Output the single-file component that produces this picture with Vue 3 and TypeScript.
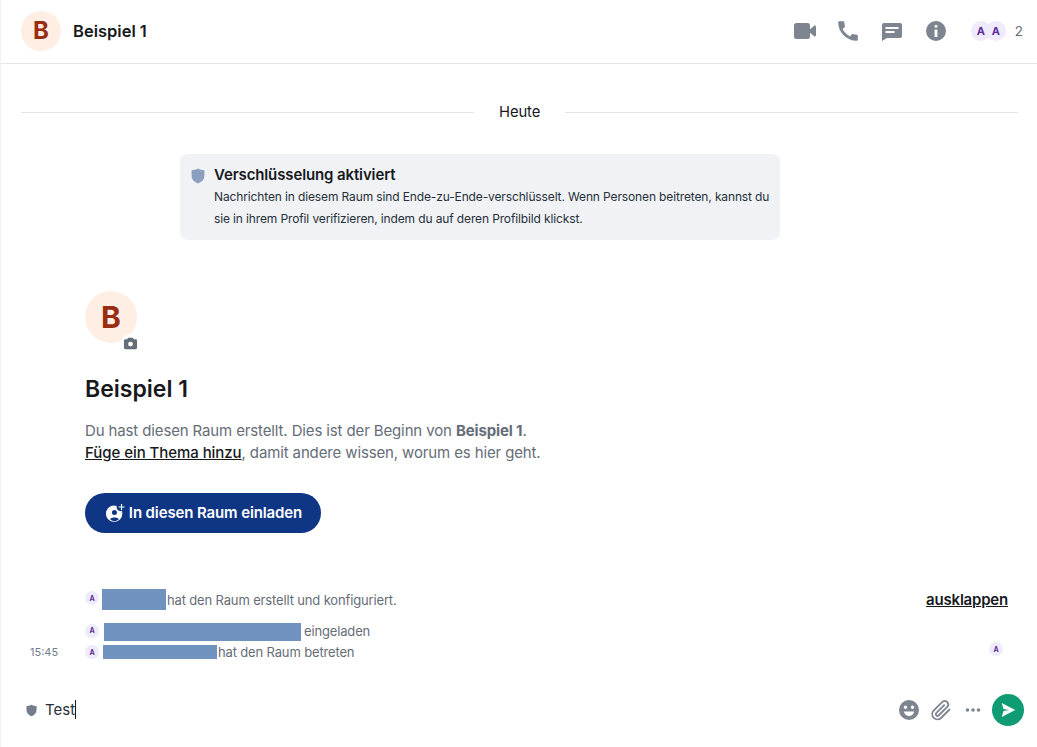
<template>
  <div class="room">
    <header class="room-header">
      <div class="avatar avatar-small">B</div>
      <h1 class="room-name">Beispiel 1</h1>
      <div class="header-actions">
        <svg class="icon video" viewBox="0 0 24 24"><path d="M3.500 4h11A2.500 2.500 0 0 1 17 6.500v3.700l4.200-3.400c.7-.5 1.800 0 1.800.9v8.600c0 .9-1.100 1.400-1.800.9L17 13.800v3.700a2.500 2.500 0 0 1-2.500 2.500h-11A2.500 2.500 0 0 1 1 17.500v-11A2.500 2.500 0 0 1 3.500 4z" /></svg>
        <svg class="icon phone" viewBox="1 1 22 22"><path d="M20.010 15.380c-1.230 0-2.420-.2-3.530-.56-.35-.12-.74-.03-1.010.24l-1.570 1.970c-2.830-1.350-5.480-3.900-6.890-6.830l1.950-1.660c.27-.28.35-.67.24-1.020-.37-1.110-.56-2.300-.56-3.530 0-.54-.45-.99-.99-.99H4.190C3.650 3 3 3.240 3 3.990 3 13.280 10.730 21 20.010 21c.71 0 .99-.63.99-1.180v-3.450c0-.54-.45-.99-.99-.99z" /></svg>
        <svg class="icon chat" viewBox="0 0 24 24"><path fill-rule="evenodd" d="M4 4h16a2 2 0 0 1 2 2v11a2 2 0 0 1-2 2H7l-5 3V6a2 2 0 0 1 2-2zM5.500 8v2h13V8zm0 4v2h9v-2z" /></svg>
        <svg class="icon info" viewBox="0 0 24 24"><path fill-rule="evenodd" d="M12 2a10 10 0 1 1 0 20 10 10 0 0 1 0-20zM12 5.800a1.500 1.500 0 1 0 0 3 1.500 1.500 0 0 0 0-3zM10.600 10.500v7.500h2.800v-7.500z" /></svg>
        <div class="members">
          <span class="face">A</span>
          <span class="face second">A</span>
          <span class="member-count">2</span>
        </div>
      </div>
    </header>

    <main class="timeline">
      <div class="date-separator">
        <span class="line"></span>
        <span class="date-label">Heute</span>
        <span class="line"></span>
      </div>

      <div class="encryption-notice">
        <svg class="shield" viewBox="0 0 14 16"><path d="M7 .6c1.800 1 3.900 1.500 6.400 1.700v5.200c0 3.900-2.400 6.500-6.400 7.900C3 14 .6 11.400.6 7.500V2.300C3.100 2.100 5.200 1.600 7 .6z" /></svg>
        <div>
          <div class="notice-title">Verschlüsselung aktiviert</div>
          <div class="notice-text">Nachrichten in diesem Raum sind Ende-zu-Ende-verschlüsselt. Wenn Personen beitreten, kannst du sie in ihrem Profil verifizieren, indem du auf deren Profilbild klickst.</div>
        </div>
      </div>

      <section class="room-intro">
        <div class="avatar-wrap">
          <div class="avatar avatar-large">B</div>
          <span class="camera">
            <svg viewBox="0 0 16 16"><path fill-rule="evenodd" d="M5.500 1.800h5l1 1.700h2A1.500 1.500 0 0 1 15 5v7.500a1.500 1.500 0 0 1-1.500 1.500h-11A1.500 1.500 0 0 1 1 12.500V5a1.500 1.500 0 0 1 1.500-1.500h2zM8 6a2.600 2.600 0 1 0 0 5.200A2.600 2.600 0 0 0 8 6z" /></svg>
          </span>
        </div>
        <h2 class="intro-name">Beispiel 1</h2>
        <p class="intro-text">
          Du hast diesen Raum erstellt. Dies ist der Beginn von <b>Beispiel 1</b>.<br />
          <a class="topic-link">Füge ein Thema hinzu</a>, damit andere wissen, worum es hier geht.
        </p>
        <button class="invite-button">
          <svg viewBox="0 0 20 20"><path fill-rule="evenodd" d="M9 2.500c.8 0 1.600.1 2.300.4a3.600 3.600 0 0 0 4.700 4.600c.4.9.5 1.800.5 2.700A7.800 7.800 0 1 1 9 2.500zM9 6.600a2.400 2.400 0 1 0 0 4.800 2.400 2.400 0 0 0 0-4.800zM4.600 15.300c1.100 1.200 2.700 2 4.400 2s3.300-.8 4.400-2c-1.100-1-2.700-1.600-4.400-1.600s-3.300.6-4.400 1.600z" /><path d="M15.200 1h1.100v2.300h2.300v1.100h-2.300v2.300h-1.100V4.400h-2.300V3.300h2.300z" /></svg>
          <span class="invite-label">In diesen Raum einladen</span>
        </button>
      </section>

      <section class="events">
        <div class="event event-summary">
          <span class="mini-face">A</span>
          <span class="redacted redacted-a"></span>
          <span class="event-text">hat den Raum erstellt und konfiguriert.</span>
          <a class="expand-link">ausklappen</a>
        </div>
        <div class="event event-invite">
          <span class="mini-face">A</span>
          <span class="redacted redacted-b"></span>
          <span class="event-text">eingeladen</span>
        </div>
        <div class="event event-join">
          <span class="timestamp">15:45</span>
          <span class="mini-face">A</span>
          <span class="redacted redacted-c"></span>
          <span class="event-text">hat den Raum betreten</span>
          <span class="mini-face receipt">A</span>
        </div>
      </section>
    </main>

    <footer class="composer">
      <svg class="composer-shield" viewBox="0 0 14 16"><path d="M7 .6c1.800 1 3.900 1.500 6.400 1.700v5.200c0 3.900-2.400 6.500-6.400 7.900C3 14 .6 11.400.6 7.500V2.300C3.100 2.100 5.200 1.600 7 .6z" /></svg>
      <div class="composer-input"><span>Test</span><i class="caret"></i></div>
      <svg class="tool smile" viewBox="0 0 24 24"><path fill-rule="evenodd" d="M12 2a10 10 0 1 1 0 20 10 10 0 0 1 0-20zM8.500 7.500a1.700 1.700 0 1 0 0 3.400 1.700 1.700 0 0 0 0-3.400zm7 0a1.700 1.700 0 1 0 0 3.400 1.700 1.700 0 0 0 0-3.400zM6.800 13.500c.5 2.700 2.600 4.500 5.200 4.500s4.700-1.800 5.200-4.500z" /></svg>
      <svg class="tool clip" viewBox="0 0 24 24"><path d="M20.500 11.500 12 20a5.200 5.200 0 0 1-7.400-7.300l9-9a3.500 3.500 0 0 1 4.900 4.900l-8.900 8.900a1.700 1.700 0 0 1-2.400-2.400l8-8" /></svg>
      <svg class="tool dots" viewBox="0 0 16 6"><circle cx="2.500" cy="3" r="1.800" /><circle cx="8" cy="3" r="1.800" /><circle cx="13.500" cy="3" r="1.800" /></svg>
      <button class="send-button">
        <svg viewBox="0 0 20 20"><path d="M3 2.200 18 10 3 17.800l2-6.600 6-1.200-6-1.200z" /></svg>
      </button>
    </footer>
  </div>
</template>

<script setup lang="ts">
</script>

<style>
html,
body {
  margin: 0;
  background: #fff;
}
</style>

<style scoped>
.room {
  width: 1037px;
  height: 747px;
  display: flex;
  flex-direction: column;
  overflow: hidden;
  font-family: Inter, "Liberation Sans", sans-serif;
  color: #17191c;
  box-sizing: border-box;
  border-left: 1px solid #f0f2f5;
}

.room-header {
  height: 64px;
  flex: none;
  box-sizing: border-box;
  display: flex;
  align-items: center;
  padding: 0 14px 2px 20px;
  border-bottom: 1px solid #e3e5e8;
}

.avatar {
  border-radius: 50%;
  background: #ffeee4;
  color: #982d12;
  font-weight: 700;
  display: flex;
  align-items: center;
  justify-content: center;
}

.avatar-small {
  width: 40px;
  height: 40px;
  font-size: 24px;
}

.room-name {
  margin: 0 0 0 12px;
  font-size: 16.500px;
  font-weight: 600;
}

.header-actions {
  margin-left: auto;
  display: flex;
  align-items: center;
}

.icon {
  width: 24px;
  height: 24px;
  fill: #7d8590;
  margin-right: 20px;
}

.video {
  margin-right: 19px;
}

.members {
  display: flex;
  align-items: center;
  margin-left: 3px;
}

.face {
  width: 20px;
  height: 20px;
  border-radius: 50%;
  background: #f0ebfa;
  color: #5c2d9e;
  font-size: 11px;
  font-weight: 700;
  display: flex;
  align-items: center;
  justify-content: center;
}

.second {
  margin-left: -5px;
}

.member-count {
  margin-left: 9px;
  font-size: 13.500px;
  color: #656d77;
}

.timeline {
  flex: 1;
  min-height: 0;
}

.date-separator {
  margin: 39px 19px 0 20px;
  height: 18px;
  display: flex;
  align-items: center;
  gap: 25px;
}

.line {
  flex: 1;
  height: 1px;
  background: #e3e5e8;
}

.date-label {
  width: 41px;
  font-size: 14.800px;
  letter-spacing: -0.1px;
  line-height: 16px;
  text-align: center;
}

.encryption-notice {
  width: 600px;
  height: 86px;
  box-sizing: border-box;
  margin: 33px 0 0 179px;
  padding: 10px 8px 0 11px;
  display: flex;
  gap: 9px;
  background: #f0f2f5;
  border-radius: 8px;
}

.shield {
  width: 14px;
  height: 16px;
  flex: none;
  margin-top: 4px;
  fill: #8c9fbf;
}

.notice-title {
  font-size: 15px;
  letter-spacing: -0.12px;
  font-weight: 600;
  line-height: 21px;
}

.notice-text {
  margin-top: 1px;
  font-size: 12px;
  letter-spacing: -0.13px;
  line-height: 21.500px;
  color: #27303a;
}

.room-intro {
  margin: 51px 0 0 84px;
}

.avatar-wrap {
  position: relative;
  width: 52px;
  height: 52px;
}

.avatar-large {
  width: 52px;
  height: 52px;
  font-size: 30px;
}

.camera {
  position: absolute;
  right: -2px;
  bottom: -9px;
  width: 18px;
  height: 18px;
  border-radius: 50%;
  background: #fff;
  display: flex;
  align-items: center;
  justify-content: center;
}

.camera svg {
  width: 15px;
  height: 15px;
  fill: #656d77;
}

.intro-name {
  margin: 32px 0 0;
  font-size: 23px;
  line-height: 28px;
  font-weight: 600;
}

.intro-text {
  margin: 17px 0 0;
  font-size: 15px;
  letter-spacing: -0.13px;
  line-height: 22px;
  color: #656d77;
}

.topic-link {
  color: #17191c;
  font-weight: 500;
  letter-spacing: -0.06px;
  text-decoration: underline;
}

.invite-button {
  margin-top: 29px;
  width: 236px;
  height: 40px;
  border: 0;
  border-radius: 20px;
  background: #0f3585;
  color: #fff;
  font: 600 15px Inter, "Liberation Sans", sans-serif;
  letter-spacing: -0.12px;
  display: flex;
  align-items: center;
  justify-content: center;
  gap: 3px;
  padding: 0 0 0 1px;
}

.invite-button svg {
  width: 21px;
  height: 21px;
  fill: #fff;
}

.invite-label {
  margin-top: -2px;
}

.events {
  margin-top: 56px;
}

.event {
  position: relative;
  display: flex;
  align-items: center;
  padding-left: 84px;
  font-size: 13px;
  letter-spacing: -0.15px;
  color: #656d77;
}

.event-summary {
  height: 21px;
  padding-right: 29px;
}

.event-invite {
  height: 18px;
  margin-top: 13px;
}

.event-invite .event-text {
  margin-top: -2px;
}

.event-join {
  height: 14px;
  margin-top: 4px;
  padding-right: 34px;
}

.mini-face {
  width: 14px;
  height: 14px;
  flex: none;
  border-radius: 50%;
  background: #f0ebfa;
  color: #5c2d9e;
  font-size: 7px;
  font-weight: 700;
  display: flex;
  align-items: center;
  justify-content: center;
}

.event-summary .mini-face,
.event-invite .mini-face {
  margin-top: -3px;
}

.redacted {
  display: block;
  height: 100%;
  background: #7092be;
}

.redacted-a {
  width: 64px;
  margin: 0 1px 0 3px;
}

.redacted-b {
  width: 197px;
  margin: 0 3px 0 5px;
}

.redacted-c {
  width: 114px;
  margin: 0 1px 0 4px;
}

.expand-link {
  margin-left: auto;
  font-size: 15px;
  letter-spacing: -0.2px;
  font-weight: 600;
  color: #17191c;
  text-decoration: underline;
}

.timestamp {
  position: absolute;
  left: 29px;
  font-size: 11px;
  letter-spacing: 0;
  color: #737d8c;
}

.receipt {
  margin-left: auto;
  margin-top: -6px;
}

.composer {
  height: 76px;
  flex: none;
  box-sizing: border-box;
  display: flex;
  align-items: center;
  padding: 2px 13px 0 25px;
}

.composer-shield {
  width: 11px;
  height: 13px;
  fill: #737d8c;
}

.composer-input {
  flex: 1;
  margin: -2px 0 0 8px;
  display: flex;
  align-items: center;
  font-size: 15px;
  color: #27303a;
}

.caret {
  width: 1px;
  height: 19px;
  background: #17191c;
}

.tool {
  fill: #7d8590;
}

.smile {
  width: 24px;
  height: 24px;
}

.clip {
  width: 24px;
  height: 24px;
  margin-left: 8px;
  fill: none;
  stroke: #7d8590;
  stroke-width: 1.800;
  stroke-linecap: round;
}

.dots {
  width: 16px;
  height: 6px;
  margin-left: 12px;
}

.send-button {
  width: 32px;
  height: 32px;
  margin-left: 11px;
  padding: 0;
  border: 0;
  border-radius: 50%;
  background: #0f9b74;
  display: flex;
  align-items: center;
  justify-content: center;
}

.send-button svg {
  width: 18px;
  height: 18px;
  fill: #fff;
}
</style>
